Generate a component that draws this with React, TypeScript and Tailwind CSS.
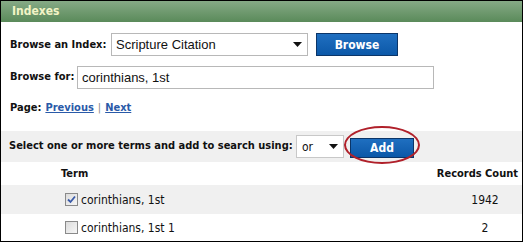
import React from 'react';

const tahoma = { fontFamily: 'Tahoma, "DejaVu Sans Condensed", "DejaVu Sans", sans-serif' };

function Caret() {
	return (
		<svg width="9" height="5" viewBox="0 0 9 5" className="shrink-0">
			<path d="M0 0 H9 L4.5 5 Z" fill="#111" />
		</svg>
	);
}

function Checkbox({ checked }: { checked?: boolean }) {
	return (
		<span className="w-[13px] h-[13px] border border-[#8a8a8a] bg-gradient-to-br from-[#dcdcdc] to-[#f6f6f6] flex items-center justify-center shrink-0">
			{checked && (
				<svg width="9" height="9" viewBox="0 0 9 9">
					<path d="M1 4.5 L3.5 7 L8 1.5" stroke="#3a5aa8" strokeWidth="1.8" fill="none" />
				</svg>
			)}
		</span>
	);
}

export default function App() {
	return (
		<div className="w-[524px] h-[243px] bg-white overflow-hidden text-[#111] whitespace-nowrap" style={tahoma}>
			<div className="w-[523px] h-[242px] border border-black flex flex-col">
				<div className="h-[21px] bg-gradient-to-b from-[#86aa86] to-[#5a8a5a] flex items-center pl-[11px]">
					<span className="text-[12px] font-bold text-[#f2f4c6]">Indexes</span>
				</div>

				<div className="flex items-center mt-[11px] pl-[9px] h-[24px]">
					<span className="text-[11px] font-bold w-[101px]">Browse an Index:</span>
					<div className="w-[197px] h-[23px] border border-[#b8b8b8] flex items-center justify-between pl-[4px] pr-[5px]" style={{ fontFamily: '"Liberation Sans", Arial, sans-serif' }}>
						<span className="text-[13px]">Scripture Citation</span>
						<Caret />
					</div>
					<button className="ml-[8px] w-[82px] h-[23px] bg-gradient-to-b from-[#1f6fc0] to-[#0b58a8] border border-[#0b3568] text-white text-[12px] font-bold">
						Browse
					</button>
				</div>

				<div className="flex items-center mt-[9px] pl-[9px] h-[24px]">
					<span className="text-[11px] font-bold w-[67px]">Browse for:</span>
					<div className="w-[357px] h-[23px] border border-[#b8b8b8] flex items-center pl-[4px]" style={{ fontFamily: '"Liberation Sans", Arial, sans-serif' }}>
						<span className="text-[13px]">corinthians, 1st</span>
					</div>
				</div>

				<div className="flex items-center mt-[12px] pl-[9px] text-[11px] font-bold h-[14px]">
					<span>Page:</span>
					<span className="ml-[4px] text-[#2a5aa8] underline">Previous</span>
					<span className="mx-[4px] text-[#888] font-normal">|</span>
					<span className="text-[#2a5aa8] underline">Next</span>
				</div>

				<div className="mt-[15px] h-[32px] bg-[#f0f0f0] flex items-center pl-[8px] relative">
					<span className="text-[11px] font-bold w-[287px]">Select one or more terms and add to search using:</span>
					<div className="w-[48px] h-[23px] bg-white border border-[#c8c8c8] flex items-center justify-between pl-[5px] pr-[5px]">
						<span className="text-[12px]">or</span>
						<Caret />
					</div>
					<div className="ml-[6px] relative">
						<button className="w-[64px] h-[20px] bg-gradient-to-b from-[#1f6fc0] to-[#0b58a8] border border-[#0b3568] text-white text-[12px] font-bold">
							Add
						</button>
						<span className="absolute -left-[6px] -top-[9px] w-[76px] h-[38px] rounded-[50%] border-[2px] border-[#b0202a]" />
					</div>
				</div>

				<div className="flex items-center h-[23px] text-[11px] font-bold">
					<span className="pl-[60px] flex-1">Term</span>
					<span className="pr-[4px]">Records Count</span>
				</div>

				<div className="flex items-center h-[29px] bg-[#f0f0f0] text-[12px]">
					<div className="pl-[64px] flex items-center gap-[3px] flex-1">
						<Checkbox checked />
						<span>corinthians, 1st</span>
					</div>
					<span className="w-[60px] text-center mr-[7px]">1942</span>
				</div>
				<div className="flex items-center h-[27px] text-[12px]">
					<div className="pl-[64px] flex items-center gap-[3px] flex-1">
						<Checkbox />
						<span>corinthians, 1st 1</span>
					</div>
					<span className="w-[60px] text-center mr-[7px]">2</span>
				</div>
			</div>
		</div>
	);
}
